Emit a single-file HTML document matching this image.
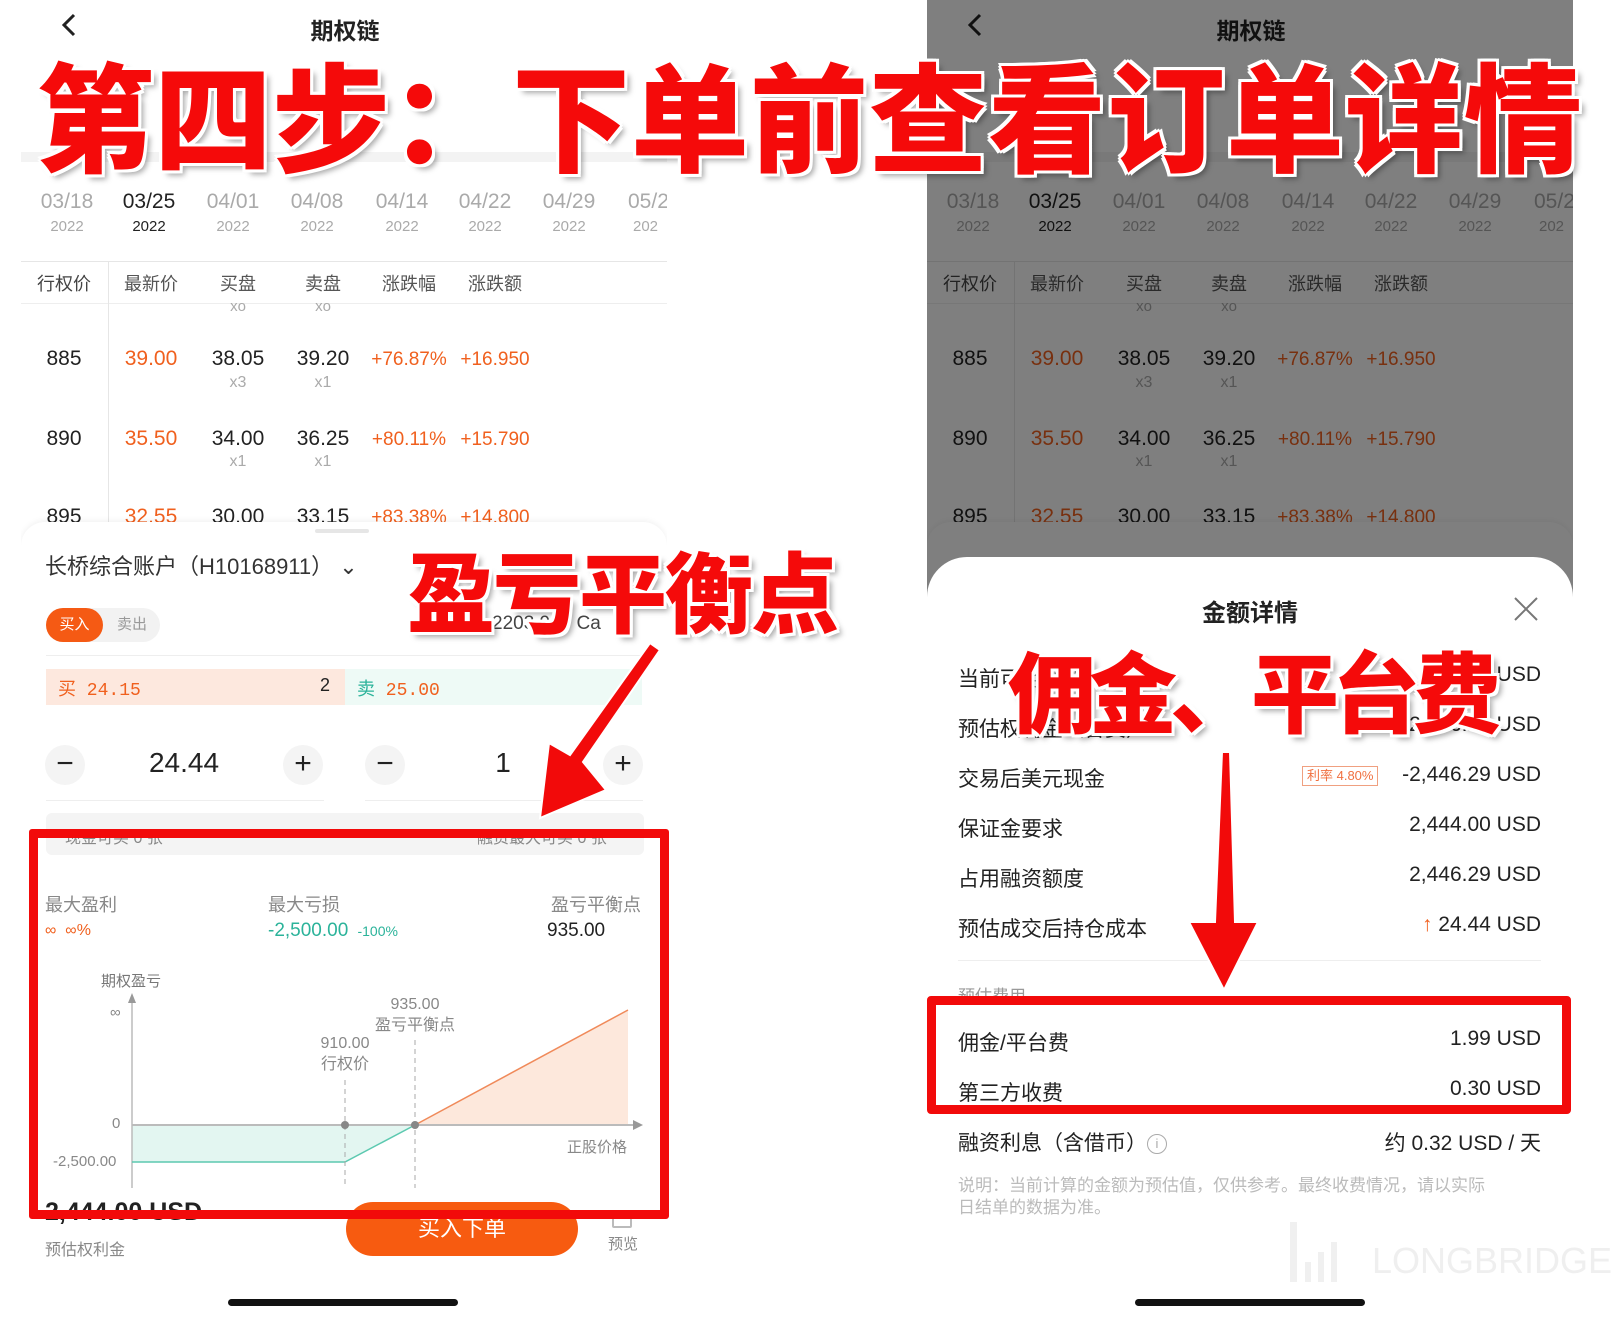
<!DOCTYPE html>
<html><head><meta charset="utf-8"><style>
*{margin:0;padding:0;box-sizing:border-box}
body{width:1614px;height:1306px;position:relative;overflow:hidden;background:#fff;font-family:"Liberation Sans","Noto Sans CJK SC",sans-serif;color:#222}
.a{position:absolute;white-space:nowrap}
.c{transform:translateX(-50%)}
.r{transform:translateX(-100%)}
.phone{position:absolute;top:0;width:646px;height:1306px;overflow:hidden;background:#fff}
.g{color:#aaa}
.o{color:#f0601e}
.big{position:absolute;white-space:nowrap;color:#f50a0a;font-family:"Noto Sans CJK SC",sans-serif;font-weight:900;
text-shadow:3px 0 #fff,-3px 0 #fff,0 3px #fff,0 -3px #fff,3px 3px #fff,-3px -3px #fff,3px -3px #fff,-3px 3px #fff,5px 5px 6px rgba(0,0,0,.35)}
</style></head><body>

<div class="phone" style="left:21px">
 <svg class="a" style="left:38px;top:12px" width="20" height="26"><path d="M15 3 L5 13 L15 23" fill="none" stroke="#222" stroke-width="3"/></svg>
 <div class="a c" style="left:324px;top:12px;font-size:23px;font-weight:bold">期权链</div>
 <div class="a" style="left:0;top:152px;width:646px;height:10px;background:#f3f3f3"></div>
 <div class="a c g" style="left:46px;top:190px;font-size:21px">03/18</div><div class="a c g" style="left:46px;top:218px;font-size:15px">2022</div>
 <div class="a c" style="left:128px;top:190px;font-size:21px">03/25</div><div class="a c" style="left:128px;top:218px;font-size:15px">2022</div>
 <div class="a c g" style="left:212px;top:190px;font-size:21px">04/01</div><div class="a c g" style="left:212px;top:218px;font-size:15px">2022</div>
 <div class="a c g" style="left:296px;top:190px;font-size:21px">04/08</div><div class="a c g" style="left:296px;top:218px;font-size:15px">2022</div>
 <div class="a c g" style="left:381px;top:190px;font-size:21px">04/14</div><div class="a c g" style="left:381px;top:218px;font-size:15px">2022</div>
 <div class="a c g" style="left:464px;top:190px;font-size:21px">04/22</div><div class="a c g" style="left:464px;top:218px;font-size:15px">2022</div>
 <div class="a c g" style="left:548px;top:190px;font-size:21px">04/29</div><div class="a c g" style="left:548px;top:218px;font-size:15px">2022</div>
 <div class="a g" style="left:607px;top:190px;font-size:21px">05/2</div><div class="a g" style="left:612px;top:218px;font-size:15px">202</div>
 <div class="a" style="left:0;top:261px;width:646px;height:1px;background:#e6e6e6"></div>
 <div class="a" style="left:0;top:303px;width:646px;height:1px;background:#eee"></div>
 <div class="a" style="left:87px;top:261px;width:1px;height:270px;background:#e6e6e6"></div>
 <div class="a c" style="left:43px;top:270px;font-size:18px;color:#444">行权价</div>
 <div class="a c" style="left:130px;top:270px;font-size:18px;color:#555">最新价</div>
 <div class="a c" style="left:217px;top:270px;font-size:18px;color:#555">买盘</div>
 <div class="a c" style="left:302px;top:270px;font-size:18px;color:#555">卖盘</div>
 <div class="a c" style="left:388px;top:270px;font-size:18px;color:#555">涨跌幅</div>
 <div class="a c" style="left:474px;top:270px;font-size:18px;color:#555">涨跌额</div>
 <div class="a c g" style="left:217px;top:298px;font-size:15px">xo</div><div class="a c g" style="left:302px;top:298px;font-size:15px">xo</div>
 <div class="a c" style="left:43px;top:347px;font-size:21px">885</div>
 <div class="a c o" style="left:130px;top:347px;font-size:21px">39.00</div>
 <div class="a c" style="left:217px;top:347px;font-size:21px">38.05</div>
 <div class="a c" style="left:302px;top:347px;font-size:21px">39.20</div>
 <div class="a c o" style="left:388px;top:349px;font-size:19px">+76.87%</div>
 <div class="a c o" style="left:474px;top:349px;font-size:19px">+16.950</div>
 <div class="a c g" style="left:217px;top:374px;font-size:16px">x3</div><div class="a c g" style="left:302px;top:374px;font-size:16px">x1</div>
 <div class="a c" style="left:43px;top:427px;font-size:21px">890</div>
 <div class="a c o" style="left:130px;top:427px;font-size:21px">35.50</div>
 <div class="a c" style="left:217px;top:427px;font-size:21px">34.00</div>
 <div class="a c" style="left:302px;top:427px;font-size:21px">36.25</div>
 <div class="a c o" style="left:388px;top:429px;font-size:19px">+80.11%</div>
 <div class="a c o" style="left:474px;top:429px;font-size:19px">+15.790</div>
 <div class="a c g" style="left:217px;top:453px;font-size:16px">x1</div><div class="a c g" style="left:302px;top:453px;font-size:16px">x1</div>
 <div class="a c" style="left:43px;top:505px;font-size:21px">895</div>
 <div class="a c o" style="left:130px;top:505px;font-size:21px">32.55</div>
 <div class="a c" style="left:217px;top:505px;font-size:21px">30.00</div>
 <div class="a c" style="left:302px;top:505px;font-size:21px">33.15</div>
 <div class="a c o" style="left:388px;top:507px;font-size:19px">+83.38%</div>
 <div class="a c o" style="left:474px;top:507px;font-size:19px">+14.800</div>
 <div class="a" style="left:0;top:522px;width:646px;height:800px;background:#fff;border-radius:24px 24px 0 0;box-shadow:0 -2px 6px rgba(0,0,0,.05)"></div>
</div>

<div class="phone" style="left:927px" id="rp"></div>

<div class="a" style="left:315px;top:529px;width:54px;height:4px;border-radius:2px;background:#e6e6e6"></div>
<div class="a" style="left:45px;top:549px;font-size:22px;color:#333">长桥综合账户（H10168911） ⌄</div>
<div class="a" style="left:46px;top:608px;width:114px;height:34px;border-radius:17px;background:#f2f2f2"></div>
<div class="a" style="left:46px;top:608px;width:57px;height:34px;border-radius:17px;background:#f55a14;color:#fff;font-size:15px;text-align:center;line-height:34px">买入</div>
<div class="a" style="left:117px;top:608px;font-size:15px;line-height:34px;color:#999">卖出</div>
<div class="a" style="left:492px;top:613px;font-size:19px;color:#444">2203 910 Ca</div>
<div class="a" style="left:46px;top:655px;width:598px;height:1px;background:#eee"></div>
<div class="a" style="left:46px;top:669px;width:299px;height:36px;background:#fde8de"></div>
<div class="a" style="left:345px;top:669px;width:297px;height:36px;background:#eefaf6"></div>
<div class="a" style="left:58px;top:675px;font-size:18px;font-family:'Liberation Mono','Noto Sans CJK SC',monospace;color:#f0601e">买 24.15</div>
<div class="a" style="left:320px;top:675px;font-size:18px">2</div>
<div class="a" style="left:357px;top:675px;font-size:18px;font-family:'Liberation Mono','Noto Sans CJK SC',monospace;color:#f0601e"><span style="color:#2bb39a">卖</span> 25.00</div>
<div class="a" style="left:45px;top:745px;width:40px;height:40px;border-radius:50%;background:#f4f4f4;font-size:30px;text-align:center;line-height:38px">−</div>
<div class="a c" style="left:184px;top:747px;font-size:28px">24.44</div>
<div class="a" style="left:283px;top:745px;width:40px;height:40px;border-radius:50%;background:#f4f4f4;font-size:30px;text-align:center;line-height:38px">+</div>
<div class="a" style="left:365px;top:745px;width:40px;height:40px;border-radius:50%;background:#f4f4f4;font-size:30px;text-align:center;line-height:38px">−</div>
<div class="a c" style="left:503px;top:747px;font-size:28px">1</div>
<div class="a" style="left:603px;top:745px;width:40px;height:40px;border-radius:50%;background:#f4f4f4;font-size:30px;text-align:center;line-height:38px">+</div>
<div class="a" style="left:46px;top:800px;width:278px;height:1px;background:#eee"></div>
<div class="a" style="left:365px;top:800px;width:278px;height:1px;background:#eee"></div>
<div class="a" style="left:46px;top:813px;width:598px;height:42px;background:#f4f4f4;border-radius:6px"></div>
<div class="a" style="left:65px;top:824px;font-size:16px;color:#888">现金可买 0 张</div>
<div class="a" style="left:477px;top:824px;font-size:16px;color:#888">融资最大可买 0 张</div>

<div class="a" style="left:45px;top:891px;font-size:18px;color:#888">最大盈利</div>
<div class="a o" style="left:45px;top:922px;font-size:16px">∞ &nbsp;∞%</div>
<div class="a" style="left:268px;top:891px;font-size:18px;color:#888">最大亏损</div>
<div class="a" style="left:268px;top:920px;font-size:19px;color:#2bb39a">-2,500.00 <span style="font-size:14px">&nbsp;-100%</span></div>
<div class="a r" style="left:641px;top:891px;font-size:18px;color:#888">盈亏平衡点</div>
<div class="a" style="left:547px;top:920px;font-size:19px">935.00</div>

<svg class="a" style="left:0;top:0" width="700" height="1306">
 <polygon points="132,1125 415,1125 345,1162 132,1162" fill="#e3f6f1"/>
 <polygon points="415,1125 628,1010 628,1125" fill="#fde8dc"/>
 <line x1="132" y1="1000" x2="132" y2="1188" stroke="#bbb" stroke-width="1.5"/>
 <polygon points="128,1003 132,993 136,1003" fill="#999"/>
 <line x1="132" y1="1125" x2="636" y2="1125" stroke="#bbb" stroke-width="2"/>
 <polygon points="633,1120 643,1125 633,1130" fill="#999"/>
 <polyline points="132,1162 345,1162 415,1125" fill="none" stroke="#5cc9b0" stroke-width="1.5"/>
 <line x1="415" y1="1125" x2="628" y2="1010" stroke="#f08a5a" stroke-width="1.5"/>
 <line x1="345" y1="1080" x2="345" y2="1188" stroke="#aaa" stroke-dasharray="5,4"/>
 <line x1="415" y1="1040" x2="415" y2="1188" stroke="#aaa" stroke-dasharray="5,4"/>
 <circle cx="345" cy="1125" r="4" fill="#888"/><circle cx="415" cy="1125" r="4" fill="#888"/>
</svg>
<div class="a c" style="left:131px;top:970px;font-size:15px;color:#777">期权盈亏</div>
<div class="a" style="left:110px;top:1004px;font-size:15px;color:#888">∞</div>
<div class="a" style="left:112px;top:1115px;font-size:15px;color:#888">0</div>
<div class="a" style="left:53px;top:1153px;font-size:15px;color:#888">-2,500.00</div>
<div class="a c" style="left:345px;top:1033px;font-size:16px;color:#888;text-align:center;line-height:21px">910.00<br>行权价</div>
<div class="a c" style="left:415px;top:994px;font-size:16px;color:#888;text-align:center;line-height:21px">935.00<br>盈亏平衡点</div>
<div class="a" style="left:567px;top:1136px;font-size:15px;color:#888">正股价格</div>

<div class="a" style="left:45px;top:1198px;font-size:25px;font-weight:bold">2,444.00 USD</div>
<div class="a" style="left:45px;top:1236px;font-size:16px;color:#888">预估权利金</div>
<div class="a" style="left:346px;top:1202px;width:232px;height:54px;border-radius:27px;background:#f75b10;color:#fff;font-size:22px;text-align:center;line-height:54px">买入下单</div>
<div class="a" style="left:612px;top:1212px;width:20px;height:16px;border:2px solid #bbb;border-radius:2px"></div>
<div class="a" style="left:608px;top:1233px;font-size:15px;color:#888">预览</div>
<div class="a" style="left:228px;top:1299px;width:230px;height:7px;border-radius:4px;background:#111"></div>

<div class="a" style="left:29px;top:829px;width:640px;height:390px;border:9px solid #f20a0a;border-radius:3px"></div>

<div class="a" style="left:927px;top:0;width:646px;height:1306px;background:rgba(0,0,0,.5)"></div>
<div class="a" style="left:927px;top:557px;width:646px;height:760px;background:#fff;border-radius:40px 40px 0 0"></div>
<div class="a c" style="left:1250px;top:593px;font-size:24px;font-weight:bold">金额详情</div>
<svg class="a" style="left:1513px;top:596px" width="26" height="26"><path d="M2 2 L24 24 M24 2 L2 24" stroke="#777" stroke-width="2"/></svg>
<div class="a" style="left:958px;top:663px;font-size:21px;color:#222">当前可用现金</div><div class="a r" style="left:1541px;top:663px;font-size:21px">2.00 USD</div>
<div class="a" style="left:958px;top:713px;font-size:21px;color:#222">预估权利金（含费）</div><div class="a r" style="left:1541px;top:713px;font-size:21px">2,446.29 USD</div>
<div class="a" style="left:958px;top:763px;font-size:21px">交易后美元现金</div>
<div class="a" style="left:1302px;top:766px;font-size:13px;color:#f07040;border:1px solid #f0a080;padding:0 4px;line-height:18px">利率 4.80%</div>
<div class="a r" style="left:1541px;top:763px;font-size:21px">-2,446.29 USD</div>
<div class="a" style="left:958px;top:813px;font-size:21px">保证金要求</div><div class="a r" style="left:1541px;top:813px;font-size:21px">2,444.00 USD</div>
<div class="a" style="left:958px;top:863px;font-size:21px">占用融资额度</div><div class="a r" style="left:1541px;top:863px;font-size:21px">2,446.29 USD</div>
<div class="a" style="left:958px;top:913px;font-size:21px">预估成交后持仓成本</div><div class="a r" style="left:1541px;top:913px;font-size:21px"><span class="o">↑</span> 24.44 USD</div>
<div class="a" style="left:958px;top:960px;width:583px;height:1px;background:#eee"></div>
<div class="a" style="left:958px;top:982px;font-size:17px;color:#999">预估费用</div>
<div class="a" style="left:958px;top:1027px;font-size:21px">佣金/平台费</div><div class="a r" style="left:1541px;top:1027px;font-size:21px">1.99 USD</div>
<div class="a" style="left:958px;top:1077px;font-size:21px">第三方收费</div><div class="a r" style="left:1541px;top:1077px;font-size:21px">0.30 USD</div>
<div class="a" style="left:958px;top:1127px;font-size:21px">融资利息（含借币）<span style="display:inline-block;width:20px;height:20px;border:1.5px solid #aaa;border-radius:50%;font-size:13px;color:#aaa;text-align:center;line-height:17px;vertical-align:2px">i</span></div>
<div class="a r" style="left:1541px;top:1127px;font-size:21px">约 0.32 USD / 天</div>
<div class="a" style="left:958px;top:1175px;font-size:17px;color:#bbb;line-height:22px">说明：当前计算的金额为预估值，仅供参考。最终收费情况，请以实际<br>日结单的数据为准。</div>
<div class="a" style="left:1290px;top:1222px;width:7px;height:60px;background:#f0f0f0"></div>
<div class="a" style="left:1305px;top:1262px;width:6px;height:20px;background:#f0f0f0"></div>
<div class="a" style="left:1318px;top:1252px;width:6px;height:30px;background:#f0f0f0"></div>
<div class="a" style="left:1331px;top:1242px;width:6px;height:40px;background:#f0f0f0"></div>
<div class="a" style="left:1372px;top:1240px;font-size:36px;color:#efefef">LONGBRIDGE</div>
<div class="a" style="left:1135px;top:1299px;width:230px;height:7px;border-radius:4px;background:#111"></div>
<div class="a" style="left:927px;top:996px;width:644px;height:118px;border:9px solid #f20a0a;border-radius:4px"></div>

<svg class="a" style="left:0;top:0" width="1614" height="1306">
 <polygon points="650,643 660,650 583,762 606,790 540,818 549,743 570,755" fill="#f20a0a" stroke="#fff" stroke-width="2"/>
 <polygon points="1222,752 1230,752 1235,922 1258,922 1224,990 1189,922 1215,922" fill="#f20a0a" stroke="#fff" stroke-width="2"/>
</svg>

<div class="big" style="left:36px;top:26px;font-size:118px;letter-spacing:0px">第四步：</div>
<div class="big" style="left:512px;top:26px;font-size:118px;letter-spacing:1px">下单前查看订单详情</div>
<div class="big" style="left:407px;top:525px;font-size:88px;letter-spacing:-2px">盈亏平衡点</div>
<div class="big" style="left:1008px;top:625px;font-size:88px;letter-spacing:-7px">佣金、平台费</div>

<script>
var l=document.querySelector('.phone');var r=document.getElementById('rp');r.innerHTML=l.innerHTML;
</script>
</body></html>
